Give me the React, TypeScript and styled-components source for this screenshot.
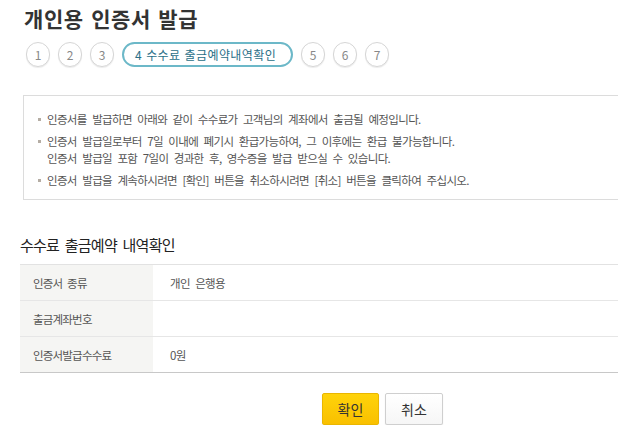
import React from 'react';
import styled, { createGlobalStyle } from 'styled-components';

const GlobalStyle = createGlobalStyle`
  html, body {
    margin: 0;
    padding: 0;
    background: #fff;
    overflow: hidden;
  }
  body {
    font-family: "Noto Sans CJK KR", "Noto Sans", sans-serif;
    color: #333;
  }
  * { box-sizing: border-box; }
`;

const Page = styled.main`
  width: 745px;
  padding: 4px 0 0 20px;
`;

const Title = styled.h1`
  margin: 0 0 0 4px;
  font-size: 21px;
  line-height: 28px;
  font-weight: 700;
  letter-spacing: 0.6px;
  word-spacing: 2px;
  color: #333;
`;

const Steps = styled.ol`
  display: flex;
  gap: 8px;
  list-style: none;
  margin: 10px 0 0 6px;
  padding: 0;
`;

const Step = styled.li<{ $active?: boolean }>`
  height: 25px;
  min-width: 24px;
  padding: ${(p) => (p.$active ? '0 15px 0 11px' : '0')};
  border: ${(p) => (p.$active ? '2px solid #6cb8c8' : '1px solid #d6d6d6')};
  border-radius: 13px;
  display: flex;
  align-items: center;
  justify-content: center;
  font-size: 12px;
  letter-spacing: ${(p) => (p.$active ? '0.4px' : '0')};
  word-spacing: ${(p) => (p.$active ? '1px' : '0')};
  color: ${(p) => (p.$active ? '#2a6f88' : '#888')};
  background: #fff;
  box-shadow: ${(p) => (p.$active ? 'none' : '0 1px 1px rgba(0,0,0,0.08)')};
`;

const Notice = styled.ul`
  list-style: none;
  margin: 28px 0 0 3px;
  padding: 15px 0 10px 13px;
  border: 1px solid #dcdcdc;
  border-right: none;
`;

const NoticeItem = styled.li`
  position: relative;
  padding-left: 10px;
  font-size: 11.5px;
  line-height: 17px;
  letter-spacing: -0.65px;
  word-spacing: 3.5px;
  color: #555;
  & + & { margin-top: 5px; }
  &::before {
    content: '';
    position: absolute;
    left: 1px;
    top: 7px;
    width: 3px;
    height: 3px;
    background: #b5ada4;
  }
`;

const SectionTitle = styled.h2`
  margin: 34px 0 0 0;
  font-size: 15px;
  line-height: 22px;
  font-weight: 400;
  letter-spacing: -0.75px;
  word-spacing: 3px;
  color: #222;
`;

const Table = styled.table`
  width: 100%;
  margin-top: 8px;
  border-collapse: collapse;
  border-top: 1px solid #e2e2e2;
  border-bottom: 1px solid #c8c8c8;
`;

const Row = styled.tr`
  height: 36px;
  & + & { border-top: 1px solid #e6e6e6; }
`;

const Label = styled.th`
  width: 133px;
  padding: 0 0 0 13px;
  background: #f5f5f3;
  text-align: left;
  font-weight: 400;
  font-size: 11.5px;
  letter-spacing: -0.8px;
  word-spacing: 3px;
  color: #555;
`;

const Value = styled.td`
  padding: 0 0 0 17px;
  font-size: 11.5px;
  letter-spacing: -0.7px;
  word-spacing: 3.5px;
  color: #555;
`;

const Actions = styled.div`
  display: flex;
  justify-content: center;
  gap: 6px;
  margin-top: 20px;
`;

const Button = styled.button<{ $primary?: boolean }>`
  width: ${(p) => (p.$primary ? '57px' : '58px')};
  height: 32px;
  border-radius: 2px;
  border: 1px solid ${(p) => (p.$primary ? '#eab600' : '#cfcfcf')};
  background: ${(p) =>
    p.$primary
      ? 'linear-gradient(#ffd30a, #f9c000)'
      : 'linear-gradient(#ffffff, #f6f6f6)'};
  box-shadow: 0 1px 1px rgba(0,0,0,0.12);
  font-family: inherit;
  font-size: 14px;
  letter-spacing: 0;
  color: #333;
  padding: 0;
  cursor: pointer;
`;

const steps = ['1', '2', '3', '4 수수료 출금예약내역확인', '5', '6', '7'];

const notices = [
  ['인증서를 발급하면 아래와 같이 수수료가 고객님의 계좌에서 출금될 예정입니다.'],
  [
    '인증서 발급일로부터 7일 이내에 폐기시 환급가능하여, 그 이후에는 환급 불가능합니다.',
    '인증서 발급일 포함 7일이 경과한 후, 영수증을 발급 받으실 수 있습니다.',
  ],
  ['인증서 발급을 계속하시려면 [확인] 버튼을 취소하시려면 [취소] 버튼을 클릭하여 주십시오.'],
];

const rows = [
  { label: '인증서 종류', value: '개인 은행용' },
  { label: '출금계좌번호', value: '' },
  { label: '인증서발급수수료', value: '0원' },
];

export default function App() {
  return (
    <Page>
      <GlobalStyle />
      <Title>개인용 인증서 발급</Title>
      <Steps>
        {steps.map((s, i) => (
          <Step key={s} $active={i === 3}>{s}</Step>
        ))}
      </Steps>
      <Notice>
        {notices.map((lines, i) => (
          <NoticeItem key={i}>
            {lines.map((l, j) => (
              <React.Fragment key={j}>
                {j > 0 && <br />}
                {l}
              </React.Fragment>
            ))}
          </NoticeItem>
        ))}
      </Notice>
      <SectionTitle>수수료 출금예약 내역확인</SectionTitle>
      <Table>
        <tbody>
          {rows.map((r) => (
            <Row key={r.label}>
              <Label>{r.label}</Label>
              <Value>{r.value}</Value>
            </Row>
          ))}
        </tbody>
      </Table>
      <Actions>
        <Button $primary>확인</Button>
        <Button>취소</Button>
      </Actions>
    </Page>
  );
}
